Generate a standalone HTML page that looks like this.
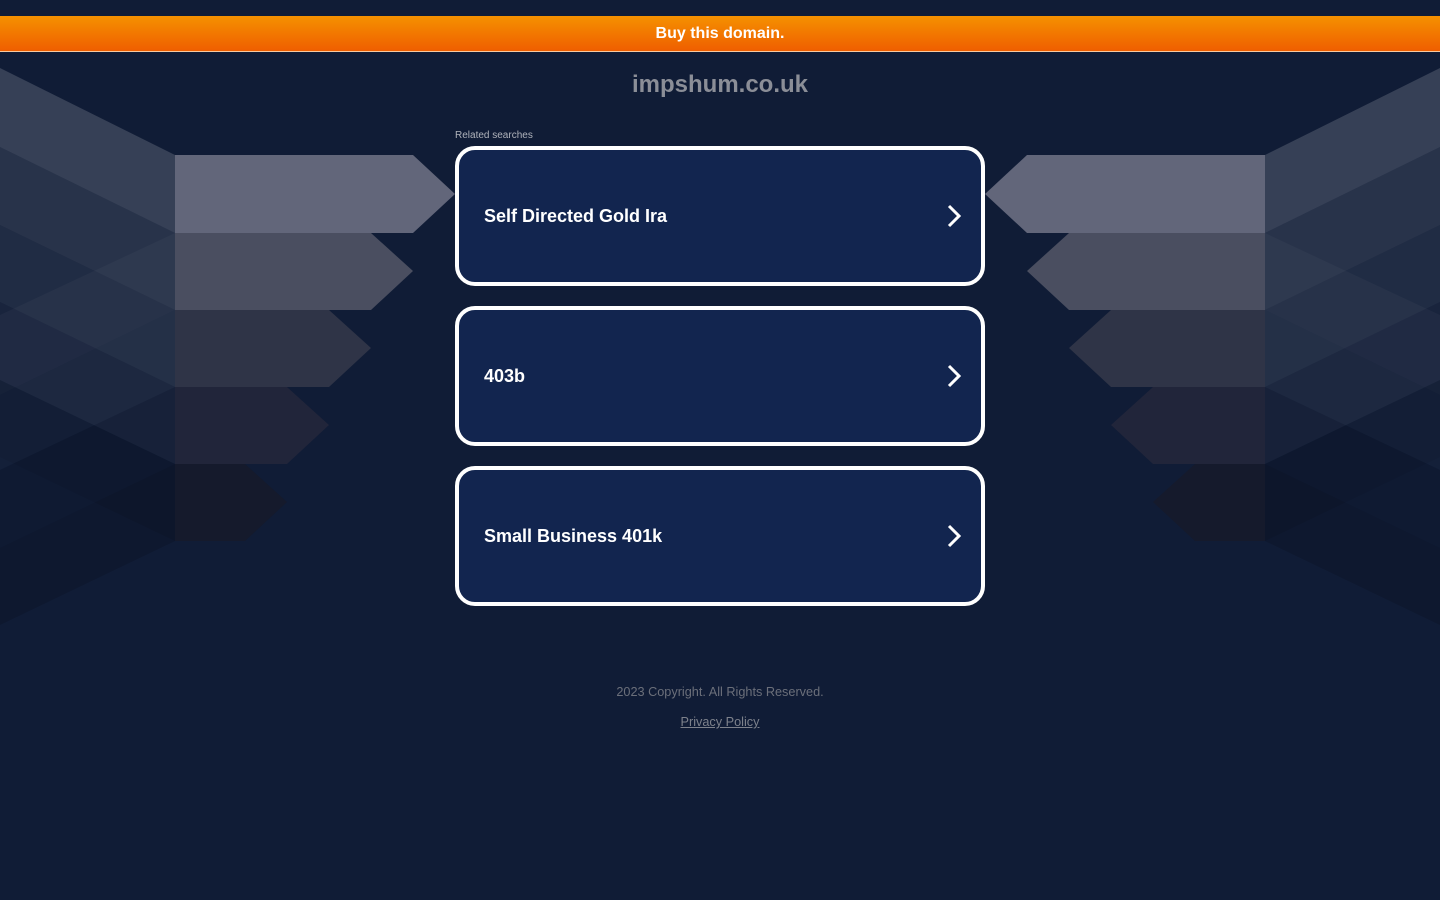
<!DOCTYPE html>
<html><head><meta charset="utf-8"><style>
body{margin:0;width:1440px;height:900px;background:#101c36;font-family:"Liberation Sans",Arial,sans-serif;position:relative;overflow:hidden}
.top{position:absolute;top:16px;left:0;width:1440px;height:35px;background:linear-gradient(#f59100,#ef5e00);border-bottom:1px solid #f7c9a0;color:#fff;font-weight:bold;font-size:16px;text-align:center;line-height:36px}
svg.bg{position:absolute;left:0;top:0}
.title{position:absolute;top:71px;width:1440px;text-align:center;color:#8b8e97;font-size:24px;font-weight:bold}
.rel{position:absolute;left:455px;top:130px;color:#b0b3bb;font-size:10px}
.card{position:absolute;left:455px;width:522px;height:132px;border:4px solid #fff;border-radius:20px;background:#12254f;color:#fff;font-weight:bold;font-size:18px}
.card span{position:absolute;left:25px;top:56px}
.card svg{position:absolute;left:484px;top:54px}
.foot{position:absolute;width:1440px;text-align:center;color:#6b6f7a;font-size:12.7px}
</style></head><body>
<svg class="bg" width="1440" height="900">
<g id="L">
<polygon points="0,68 175,155 175,233 0,147" fill="#fff" fill-opacity=".16"/>
<polygon points="0,147 175,233 175,310 0,225" fill="#fff" fill-opacity=".1"/>
<polygon points="0,225 175,310 175,387 0,302" fill="#fff" fill-opacity=".07"/>
<polygon points="0,302 175,387 175,464 0,380" fill="#fff" fill-opacity=".04"/>
<polygon points="0,380 175,464 175,541 0,457" fill="#000" fill-opacity=".06"/>
<polygon points="0,315 175,233 175,310 0,395" fill="#fff" fill-opacity=".03"/>
<polygon points="0,395 175,310 175,387 0,470" fill="#fff" fill-opacity=".02"/>
<polygon points="0,470 175,387 175,464 0,548" fill="#000" fill-opacity=".06"/>
<polygon points="0,548 175,464 175,541 0,625" fill="#000" fill-opacity=".12"/>
<polygon points="175,155 413,155 455,194 413,233 175,233" fill="#62667a"/>
<polygon points="175,233 371,233 413,271 371,310 175,310" fill="#4a4e60"/>
<polygon points="175,310 329,310 371,348 329,387 175,387" fill="#2f3447"/>
<polygon points="175,387 287,387 329,425 287,464 175,464" fill="#21253a"/>
<polygon points="175,464 245,464 287,502 245,541 175,541" fill="#151a2c"/>
</g>
<use href="#L" transform="translate(1440,0) scale(-1,1)"/>
</svg>
<div class="top">Buy this domain.</div>
<div class="title">impshum.co.uk</div>
<div class="rel">Related searches</div>
<div class="card" style="top:146px"><span>Self Directed Gold Ira</span><svg width="24" height="24" viewBox="0 0 24 24"><path d="M6 2l10 10-10 10" fill="none" stroke="#fff" stroke-width="3"/></svg></div>
<div class="card" style="top:306px"><span>403b</span><svg width="24" height="24" viewBox="0 0 24 24"><path d="M6 2l10 10-10 10" fill="none" stroke="#fff" stroke-width="3"/></svg></div>
<div class="card" style="top:466px"><span>Small Business 401k</span><svg width="24" height="24" viewBox="0 0 24 24"><path d="M6 2l10 10-10 10" fill="none" stroke="#fff" stroke-width="3"/></svg></div>
<div class="foot" style="top:685px">2023 Copyright. All Rights Reserved.</div>
<div class="foot" style="top:715px"><span style="text-decoration:underline;color:#7d818b">Privacy Policy</span></div>
</body></html>
